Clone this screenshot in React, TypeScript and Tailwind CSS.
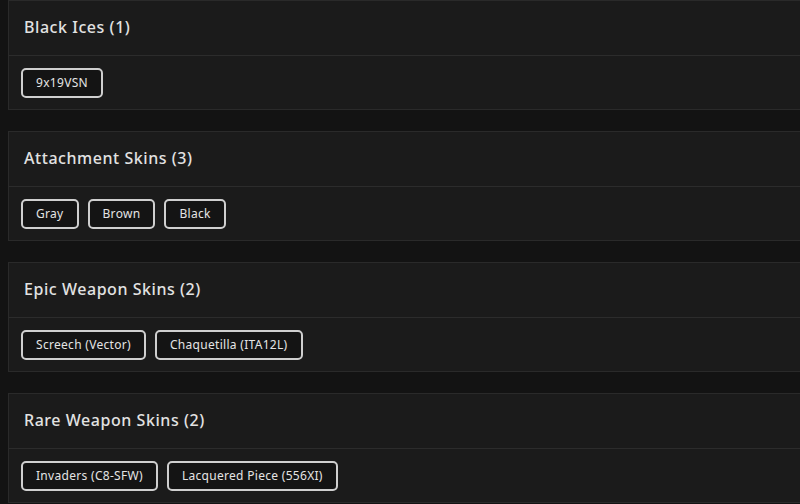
const sections: { title: string; items: string[] }[] = [
  { title: "Black Ices (1)", items: ["9x19VSN"] },
  { title: "Attachment Skins (3)", items: ["Gray", "Brown", "Black"] },
  { title: "Epic Weapon Skins (2)", items: ["Screech (Vector)", "Chaquetilla (ITA12L)"] },
  { title: "Rare Weapon Skins (2)", items: ["Invaders (C8-SFW)", "Lacquered Piece (556XI)"] },
];

function Chip({ label }: { label: string }) {
  return (
    <span className="flex h-[30px] items-center rounded-[5px] border-2 border-[#cfcfcf] bg-[#141414] px-[13px] text-[12px] tracking-[0.3px] text-[#e4e4e4]">
      {label}
    </span>
  );
}

function Section({ title, items }: { title: string; items: string[] }) {
  return (
    <div className="w-[900px] shrink-0 border border-[#2a2a2a] bg-[#1b1b1b]">
      <div className="flex h-[55px] items-center border-b border-[#2c2c2c] px-[15px] pb-[2px]">
        <h2 className="text-[16px] font-medium tracking-[0.55px] text-[#e2e2e2]">{title}</h2>
      </div>
      <div className="flex h-[53px] items-center gap-[9px] px-[12px]">
        {items.map((it) => (
          <Chip key={it} label={it} />
        ))}
      </div>
    </div>
  );
}

export default function App() {
  return (
    <div
      className="h-[504px] w-[800px] overflow-hidden bg-[#131313]"
      style={{ fontFamily: '"Noto Sans", sans-serif' }}
    >
      <div className="flex flex-col gap-[21px] pl-2">
        {sections.map((s) => (
          <Section key={s.title} {...s} />
        ))}
      </div>
    </div>
  );
}
